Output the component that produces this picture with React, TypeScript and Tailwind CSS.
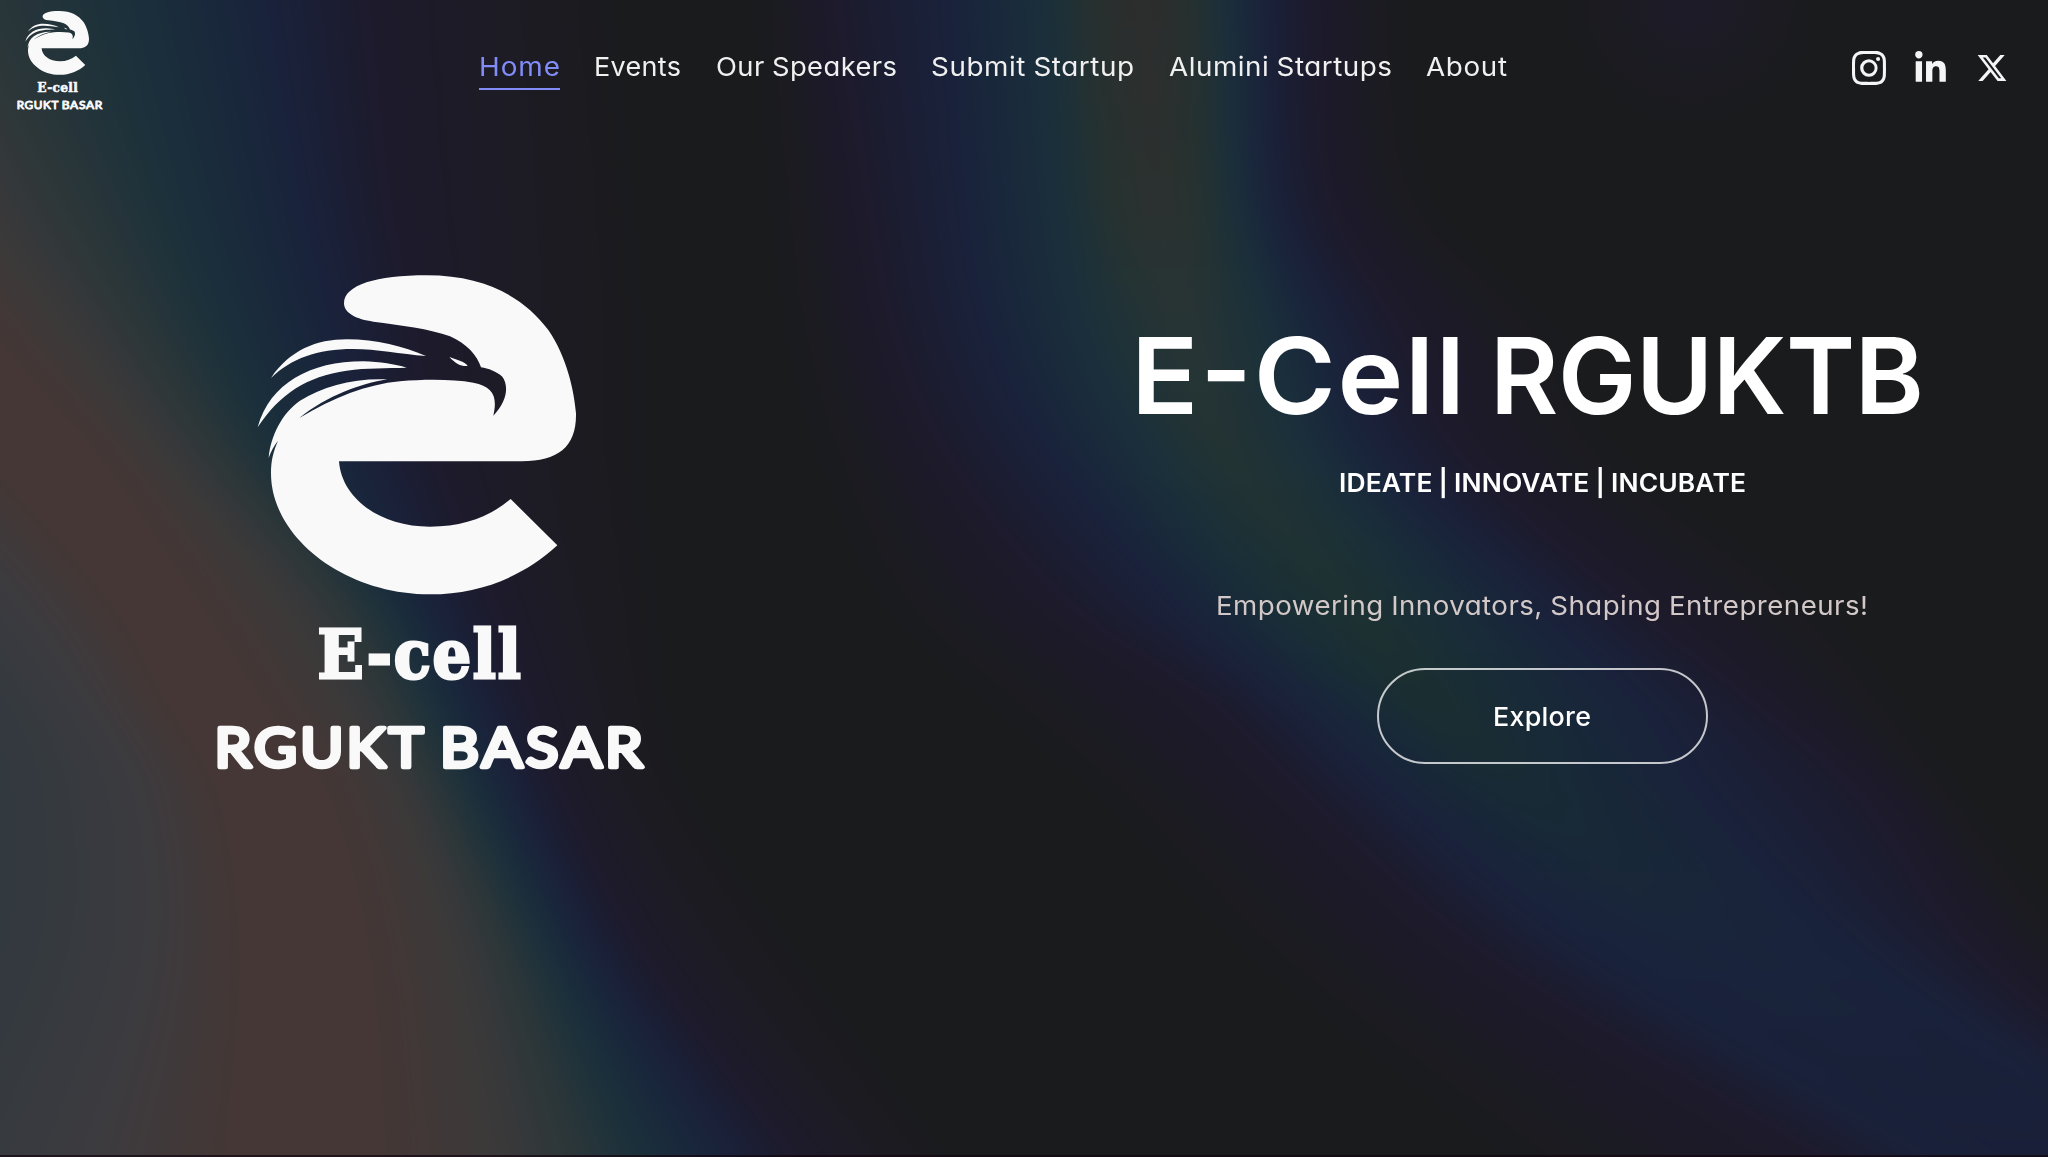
import { useLayoutEffect, useRef } from 'react';
import { BsInstagram } from 'react-icons/bs';
import { FaLinkedinIn, FaXTwitter } from 'react-icons/fa6';

/* ---------- aurora background ---------- */

const D = '#1a1b1d';
const Q = '#1d1b24';
const P = '#1d1a2c';
const N = '#19223b';
const T = '#1a303b';
const G = '#2a3639';
const A = '#3b393a';
const B = '#443735';
const S = '#32393f';
const C = '#3c3b3f';

const leftColors = [S, C, B, B, A, G, T, N, P, Q, D];
const rightColors = [D, P, N, T];

// y, left ribbon positions, right ribbon positions, ribbon core colours (shoulder, centre)
type Row = [number, number[], number[], string, string, string];
const rows: Row[] = [
  [0, [-600, -450, -330, -200, -110, -20, 130, 270, 370, 500, 620], [760, 830, 950, 1050, 1090, 1145, 1190, 1225, 1260, 1310, 1400], T, '#27302f', '#2d2c2c'],
  [200, [-520, -380, -240, -90, -20, 80, 180, 305, 390, 515, 640], [775, 865, 965, 1065, 1110, 1160, 1200, 1235, 1270, 1325, 1430], T, '#26322f', '#2c3130'],
  [330, [-400, -250, -120, -5, 75, 150, 225, 335, 415, 520, 650], [790, 890, 990, 1090, 1140, 1190, 1220, 1268, 1325, 1400, 1560], T, '#223336', '#293435'],
  [450, [-250, -120, -20, 100, 165, 225, 280, 360, 435, 525, 650], [820, 940, 1050, 1150, 1195, 1225, 1255, 1305, 1375, 1460, 1620], T, '#203235', '#243334'],
  [600, [-110, 20, 110, 200, 290, 345, 385, 430, 490, 560, 660], [880, 1060, 1180, 1262, 1315, 1350, 1375, 1425, 1530, 1630, 1820], '#192e38', '#1b3033', '#1e3132'],
  [700, [-20, 90, 165, 265, 350, 398, 432, 475, 527, 590, 665], [980, 1210, 1295, 1370, 1410, 1430, 1450, 1510, 1640, 1760, 1900], '#182b37', '#1a2e32', '#1b2f30'],
  [790, [10, 140, 215, 330, 405, 440, 473, 512, 558, 615, 690], [1090, 1300, 1390, 1470, 1500, 1520, 1540, 1590, 1700, 1870, 1960], '#182837', '#182a36', '#192b34'],
  [950, [0, 150, 240, 370, 460, 510, 545, 590, 640, 705, 800], [1240, 1480, 1590, 1660, 1690, 1720, 1750, 1790, 1860, 1980, 2090], '#19233b', '#19243b', '#19243c'],
  [1157, [-100, 90, 230, 385, 500, 580, 640, 725, 795, 865, 950], [1500, 1820, 1950, 2010, 2040, 2070, 2100, 2130, 2170, 2230, 2300], '#191f37', '#191f38', '#191f38'],
];

const toRgb = (hex: string) => [1, 3, 5].map((i) => parseInt(hex.slice(i, i + 2), 16));
const mix = (a: string, b: string, t: number) => {
  const from = toRgb(a);
  const to = toRgb(b);
  return `rgb(${from.map((v, i) => (v + (to[i] - v) * t).toFixed(2)).join(',')})`;
};

const colorsOf = (r: Row) => [...leftColors, ...rightColors.slice(0, 3), r[3], r[4], r[5], r[4], r[3], N, P, D];
const pointsOf = (r: Row) => [...r[1], ...r[2]];

function curve(p0: number, p1: number, p2: number, p3: number, y: number[], t: number) {
  const h = y[2] - y[1];
  const m1 = y[0] === y[1] ? (p2 - p1) / h : (p2 - p0) / (y[2] - y[0]);
  const m2 = y[3] === y[2] ? (p2 - p1) / h : (p3 - p1) / (y[3] - y[1]);
  const t2 = t * t;
  const t3 = t2 * t;
  return (2 * t3 - 3 * t2 + 1) * p1 + (t3 - 2 * t2 + t) * h * m1 + (-2 * t3 + 3 * t2) * p2 + (t3 - t2) * h * m2;
}

const STEP = 4;
const bands = Array.from({ length: Math.ceil(1157 / STEP) }, (_, i) => {
  const y = i * STEP;
  let k = 0;
  while (k < rows.length - 2 && rows[k + 1][0] <= y) k++;
  const near = [Math.max(k - 1, 0), k, k + 1, Math.min(k + 2, rows.length - 1)].map((n) => rows[n]);
  const ys = near.map((r) => r[0]);
  const t = (y - ys[1]) / (ys[2] - ys[1]);
  const pts = near.map(pointsOf);
  const ca = colorsOf(near[1]);
  const cb = colorsOf(near[2]);
  return {
    y,
    stops: pts[1].map((_, j) => ({
      x: curve(pts[0][j], pts[1][j], pts[2][j], pts[3][j], ys, t),
      color: mix(ca[j], cb[j], t),
    })),
  };
});

const X0 = -600;
const X1 = 2400;

function Aurora() {
  return (
    <svg className="absolute inset-0 h-full w-full" viewBox="0 0 2048 1157" preserveAspectRatio="none" aria-hidden="true">
      <defs>
        <filter id="soften" x="-5%" y="-5%" width="110%" height="110%" colorInterpolationFilters="sRGB">
          <feGaussianBlur stdDeviation="14 8" />
        </filter>
        <radialGradient id="glow">
          <stop offset="0" stopColor="#211b33" stopOpacity="0.55" />
          <stop offset="1" stopColor="#211b33" stopOpacity="0" />
        </radialGradient>
        {bands.map((b) => (
          <linearGradient key={b.y} id={`band${b.y}`} gradientUnits="userSpaceOnUse" x1={X0} x2={X1} y1="0" y2="0">
            {b.stops.map((s, i) => (
              <stop key={i} offset={(s.x - X0) / (X1 - X0)} stopColor={s.color} />
            ))}
          </linearGradient>
        ))}
      </defs>
      <g filter="url(#soften)">
        {bands.map((b, i) => {
          const top = i === 0 ? -60 : b.y;
          const bottom = i === bands.length - 1 ? 1220 : b.y + STEP + 1;
          return <rect key={b.y} x="-80" width="2210" y={top} height={bottom - top} fill={`url(#band${b.y})`} />;
        })}
      </g>
      <ellipse cx="1690" cy="0" rx="130" ry="130" fill="url(#glow)" />
    </svg>
  );
}

/* ---------- text set to a given measure ---------- */

// A third of the slack goes to tracking, the rest to glyph width.
function Fit({ width, children }: { width: number; children: string }) {
  const ref = useRef<HTMLSpanElement>(null);
  useLayoutEffect(() => {
    const el = ref.current;
    if (!el) return;
    el.style.letterSpacing = '0px';
    el.style.transform = 'none';
    const natural = el.getBoundingClientRect().width;
    const spacing = (width - natural) / 3 / (children.length - 1);
    const tracked = natural + spacing * (children.length - 1);
    el.style.letterSpacing = `${spacing}px`;
    el.style.transform = `scaleX(${width / tracked})`;
  }, [width, children]);
  return (
    <span className="inline-block whitespace-nowrap text-left" style={{ width }}>
      <span ref={ref} className="inline-block origin-left">
        {children}
      </span>
    </span>
  );
}

/* ---------- logo ---------- */

function Logo({ className }: { className: string }) {
  return (
    <svg className={className} viewBox="206 270 450 520" fill="#f9f9f9" role="img" aria-label="E-cell RGUKT Basar">
      <g transform="translate(200 250) scale(0.33333)">
        <path d="M432 160C432 105 530 76 680 76C860 76 974 145 1045 240C1100 320 1122 420 1128 490C1130 590 1075 634 965 634L417 634C425 745 540 830 690 830C790 830 870 800 932 747L1072 886C970 980 840 1033 690 1033C430 1033 213 860 213 670C213 630 220 605 234 572C222 588 212 605 206 624C211 560 245 490 300 452C370 408 460 384 562 388C480 402 385 435 298 504C400 443 500 403 600 394C680 387 760 388 820 398C880 410 893 440 880 497C925 450 925 405 907 380C890 365 865 355 843 352C832 318 800 280 750 259C690 236 600 226 520 215C470 208 432 190 432 160Z" />
        <path d="M213 384C270 300 350 268 440 268C530 268 610 290 678 318C600 312 530 297 460 297C350 297 275 325 213 384Z" />
        <path d="M173 532C210 400 330 334 490 334C540 336 585 342 620 353C560 355 500 353 440 362C320 380 240 430 173 532Z" />
        <path d="M748 321C770 330 797 335 803 348C785 350 768 342 748 321Z" />
      </g>
      <text x="317.5" y="677.5" fontFamily="'DejaVu Serif', serif" fontWeight="700" fontSize="67" stroke="#f9f9f9" strokeWidth="3" letterSpacing="2" textLength="205" lengthAdjust="spacingAndGlyphs">
        E-cell
      </text>
      <g fontFamily="Lato, sans-serif" fontWeight="400" fontSize="55" stroke="#f9f9f9" strokeWidth="4.5" strokeLinejoin="round" strokeLinecap="round" letterSpacing="3">
        <text x="214.5" y="766.5" textLength="212" lengthAdjust="spacingAndGlyphs">RGUKT</text>
        <text x="440" y="766.5" textLength="206" lengthAdjust="spacingAndGlyphs">BASAR</text>
      </g>
    </svg>
  );
}

/* ---------- page ---------- */

const links = [
  { label: 'Home', width: 81, active: true },
  { label: 'Events', width: 87 },
  { label: 'Our Speakers', width: 181 },
  { label: 'Submit Startup', width: 203 },
  { label: 'Alumini Startups', width: 223 },
  { label: 'About', width: 81 },
];

export default function App() {
  return (
    <div className="relative h-[1157px] w-[2048px] overflow-hidden bg-[#1b1b1d] font-[Inter,sans-serif] text-white [font-feature-settings:'cv11','case'] [word-spacing:-0.05em]">
      <Aurora />
      <div className="absolute inset-x-0 bottom-0 h-[2px] bg-[#12060f]/70" />
      <div className="relative flex h-full flex-col">
        <header className="flex h-[134px] items-start">
          <a href="#" className="ml-[15px] mt-[10px] block">
            <Logo className="h-[104px] w-[90px]" />
          </a>
          <nav className="ml-[373.5px] mt-[47px] flex gap-[34.6px] text-[26px] leading-[40px] text-[#f0f0f0]">
            {links.map((l) => (
              <a
                key={l.label}
                href="#"
                className={l.active ? 'h-[43px] border-b-2 border-[#818cf8] text-[#818cf8]' : 'h-[43px]'}
              >
                <Fit width={l.width}>{l.label}</Fit>
              </a>
            ))}
          </nav>
          <div className="ml-auto mr-[40px] mt-[49px] flex h-[38px] items-center text-[#f5f5f5]">
            <BsInstagram className="size-[34px]" />
            <FaLinkedinIn className="ml-[27px] size-[35px]" />
            <FaXTwitter className="ml-[28px] size-[32px]" />
          </div>
        </header>
        <main className="flex">
          <section className="ml-[206px] mt-[136px] w-[450px]">
            <Logo className="h-[520px] w-[450px]" />
          </section>
          <section className="ml-[476px] mt-[178px] flex w-[820px] flex-col items-center">
            <h1 className="-ml-[29px] flex gap-[25px] text-[106px] font-semibold leading-[128px]">
              <Fit width={334}>E-Cell</Fit>
              <Fit width={434}>RGUKTB</Fit>
            </h1>
            <p className="mt-[23px] text-[26px] font-semibold leading-[40px]">
              <Fit width={407}>IDEATE | INNOVATE | INCUBATE</Fit>
            </p>
            <p className="mt-[83px] text-[26px] leading-[40px] text-[#d3c8c8]">
              <Fit width={652}>Empowering Innovators, Shaping Entrepreneurs!</Fit>
            </p>
            <button className="mt-[42px] h-[96px] w-[331px] rounded-full border-2 border-white/75 text-[26px] font-medium">
              <Fit width={98}>Explore</Fit>
            </button>
          </section>
        </main>
      </div>
    </div>
  );
}
